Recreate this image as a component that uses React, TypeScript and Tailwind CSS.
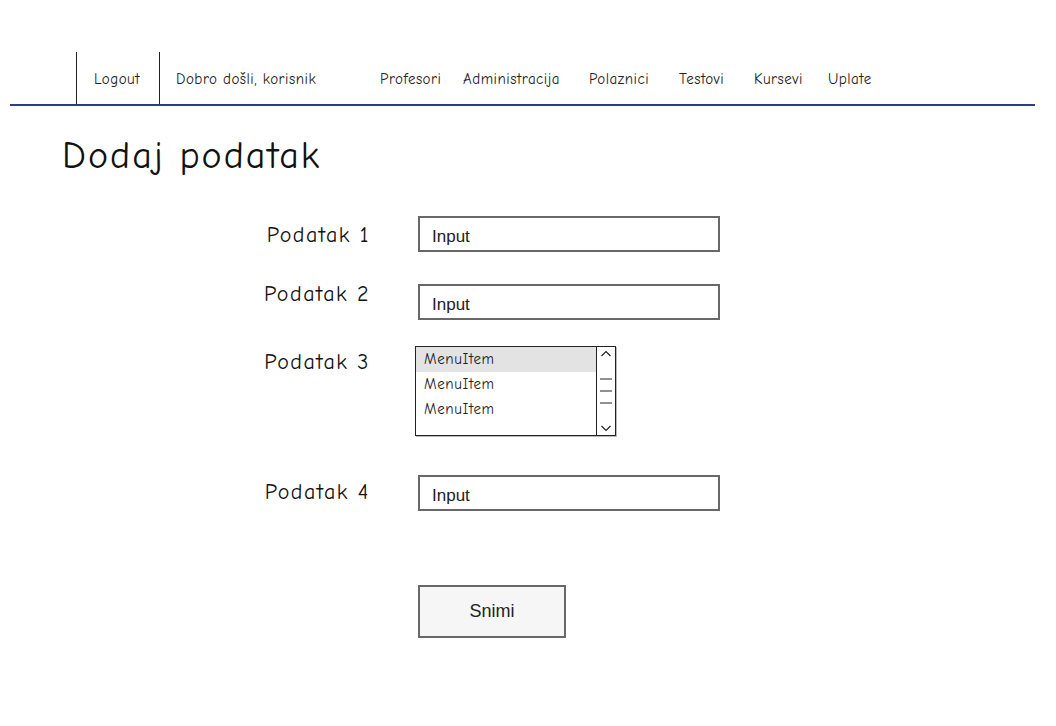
import React from "react";

const sketch = { fontFamily: '"Comic Sans MS", "Comic Neue", "DejaVu Sans", sans-serif' };
const plain = { fontFamily: '"Liberation Sans", Arial, sans-serif' };

const navItems = [
  { label: "Profesori", w: "w-[83px]" },
  { label: "Administracija", w: "w-[126px]" },
  { label: "Polaznici", w: "w-[90px]" },
  { label: "Testovi", w: "w-[75px]" },
  { label: "Kursevi", w: "w-[74px]" },
  { label: "Uplate", w: "w-[60px]" },
];

function TextInput() {
  return (
    <div
      className="w-[302px] h-[36px] border-2 border-[#686868] bg-white flex items-center pl-3 pt-[5px] text-[17px] text-[#222]"
      style={plain}
    >
      Input
    </div>
  );
}

function ListBox() {
  return (
    <div className="w-[201px] h-[90px] border border-[#222] bg-white flex shadow-[1px_1px_0_#bbb]" style={sketch}>
      <div className="flex-1 flex flex-col text-[15px] tracking-[0.6px] text-[#222]">
        <div className="h-[25px] bg-[#e3e3e3] flex items-center pl-2">MenuItem</div>
        <div className="h-[25px] flex items-center pl-2">MenuItem</div>
        <div className="h-[25px] flex items-center pl-2">MenuItem</div>
      </div>
      <div className="w-[19px] border-l border-[#222] flex flex-col items-center justify-between py-[2px]">
        <svg width="12" height="10" viewBox="0 0 12 10" fill="none" stroke="#222" strokeWidth="1.2">
          <path d="M1.5 7 L6 2.5 L10.5 7" />
        </svg>
        <svg width="14" height="34" viewBox="0 0 14 34" fill="none" stroke="#222" strokeWidth="1.2">
          <path d="M1 5 H13 M1 17 H13 M1 29 H13" />
        </svg>
        <svg width="12" height="10" viewBox="0 0 12 10" fill="none" stroke="#222" strokeWidth="1.2">
          <path d="M1.5 3 L6 7.5 L10.5 3" />
        </svg>
      </div>
    </div>
  );
}

function Row({ label, labelTop, children }: { label: string; labelTop: string; children: React.ReactNode }) {
  return (
    <div className="flex items-start">
      <div
        className={`w-[170px] text-right text-[22px] tracking-[1.5px] leading-[24px] text-[#111] ${labelTop}`}
        style={sketch}
      >
        {label}
      </div>
      <div className="ml-[48px]">{children}</div>
    </div>
  );
}

export default function App() {
  return (
    <div className="w-[1056px] h-[726px] bg-white overflow-hidden">
      <div className="pt-[52px] px-[10px]">
        <div
          className="flex h-[52px] pl-[66px] text-[15px] tracking-[0.5px] text-[#222] whitespace-nowrap"
          style={sketch}
        >
          <div className="w-[83px] border-l border-[#222] pl-[17px] pt-[3px] flex items-center">Logout</div>
          <div className="w-[221px] border-l border-[#222] pl-[16px] pt-[3px] flex items-center">
            Dobro došli, korisnik
          </div>
          {navItems.map((item) => (
            <div key={item.label} className={`${item.w} pt-[3px] flex items-center`}>
              {item.label}
            </div>
          ))}
        </div>
        <div className="w-[1025px] h-[2px] bg-[#2b3f88]" />
      </div>

      <h1 className="ml-[62px] mt-[28px] text-[38px] tracking-[2px] leading-[44px] text-[#111]" style={sketch}>
        Dodaj podatak
      </h1>

      <div className="ml-[200px] mt-[38px] flex flex-col">
        <Row label="Podatak 1" labelTop="mt-[7px]">
          <TextInput />
        </Row>
        <div className="mt-[32px]">
          <Row label="Podatak 2" labelTop="mt-[-2px]">
            <TextInput />
          </Row>
        </div>
        <div className="mt-[26px]">
          <Row label="Podatak 3" labelTop="mt-[4px]">
            <div className="-ml-[3px]">
              <ListBox />
            </div>
          </Row>
        </div>
        <div className="mt-[39px]">
          <Row label="Podatak 4" labelTop="mt-[5px]">
            <TextInput />
          </Row>
        </div>
        <div className="mt-[74px] ml-[218px]">
          <button
            className="w-[148px] h-[53px] border-2 border-[#686868] bg-[#f6f6f6] text-[18px] text-[#222]"
            style={plain}
          >
            Snimi
          </button>
        </div>
      </div>
    </div>
  );
}
